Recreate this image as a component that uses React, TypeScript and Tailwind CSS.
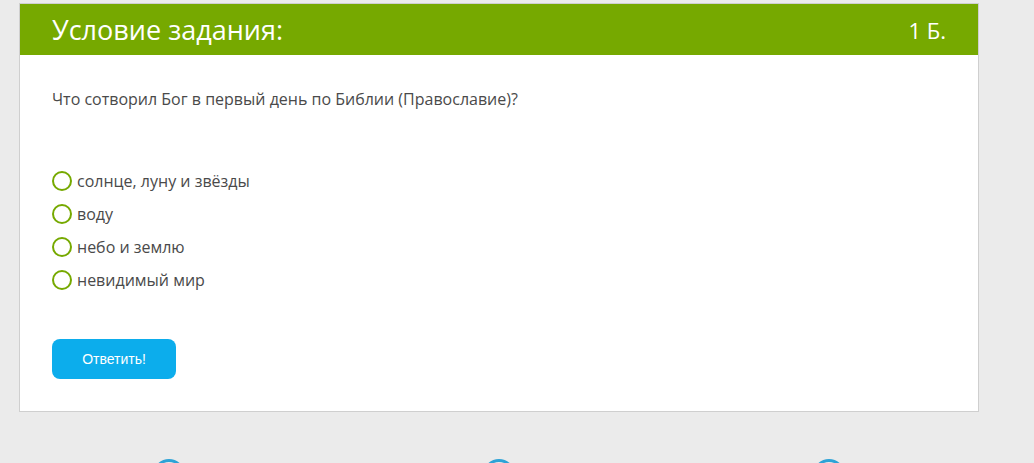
import React from "react";

const options = ["солнце, луну и звёзды", "воду", "небо и землю", "невидимый мир"];

export default function App() {
  return (
    <div className="w-[1034px] h-[463px] overflow-hidden bg-[#ebebeb] relative" style={{ fontFamily: '"Open Sans", sans-serif' }}>
      <div className="ml-[19px] mt-[3px] w-[960px] border border-[#cfcfcf] bg-white">
        <div className="h-[51px] bg-[#76a900] flex items-center justify-between pl-[32px] pr-[32px] text-white">
          <span className="text-[27px] leading-none">Условие задания:</span>
          <span className="text-[22px] leading-none">1 Б.</span>
        </div>
        <div className="pl-[32px] pt-[33px] pb-[32px]">
          <div className="text-[16px] text-[#4a4a4a] leading-[22px]">Что сотворил Бог в первый день по Библии (Православие)?</div>
          <div className="mt-[60px] flex flex-col gap-[11px]">
            {options.map((o) => (
              <div key={o} className="flex items-center h-[22px]">
                <span className="w-[20px] h-[20px] rounded-full border-2 border-[#76a900] bg-white mr-[5px]" />
                <span className="text-[16px] text-[#4a4a4a] leading-[22px]">{o}</span>
              </div>
            ))}
          </div>
          <button className="mt-[48px] w-[124px] h-[40px] rounded-[8px] bg-[#0cadec] text-white text-[14px]" style={{ fontFamily: '"Liberation Sans", Arial, sans-serif' }}>
            Ответить!
          </button>
        </div>
      </div>
      <div className="absolute left-[153px] top-[459px] w-[32px] h-[32px] rounded-full border-[3px] border-[#2ea3d6]" />
      <div className="absolute left-[483px] top-[459px] w-[32px] h-[32px] rounded-full border-[3px] border-[#2ea3d6]" />
      <div className="absolute left-[813px] top-[459px] w-[32px] h-[32px] rounded-full border-[3px] border-[#2ea3d6]" />
    </div>
  );
}
